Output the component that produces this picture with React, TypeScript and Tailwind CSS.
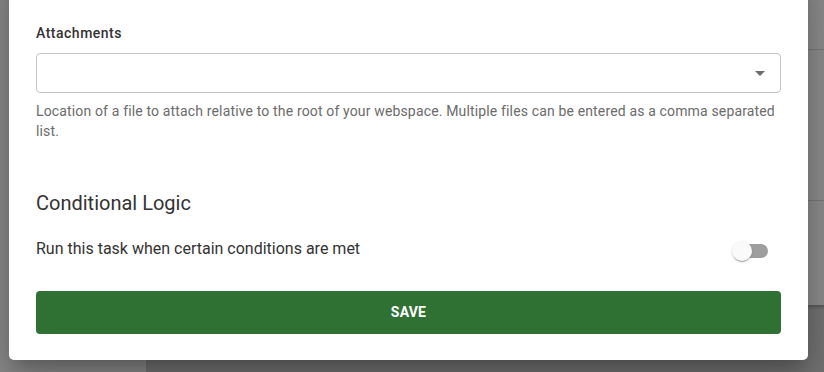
import React from "react";

const font = { fontFamily: "Roboto, 'Liberation Sans', sans-serif" };

const Switch = () => (
  <div className="relative w-[38px] h-[20px] flex items-center">
    <div className="absolute left-[2px] right-[2px] h-[14px] rounded-full bg-[#9e9e9e]" />
    <div className="absolute left-0 w-[20px] h-[20px] rounded-full bg-[#fafafa] shadow-[0_2px_1px_-1px_rgba(0,0,0,0.2),0_1px_1px_0_rgba(0,0,0,0.14),0_1px_3px_0_rgba(0,0,0,0.12)]" />
  </div>
);

const App = () => {
  return (
    <div className="relative w-[824px] h-[372px] overflow-hidden" style={font}>
      {/* dimmed page behind the dialog */}
      <div className="flex h-full">
        <div className="w-[146px] bg-[#8c8c8c]" />
        <div className="flex-1 bg-[#747474] pl-[20px]">
          <div className="mr-[-40px] flex flex-col bg-[#8e8e8e] shadow-[0_2px_3px_rgba(0,0,0,0.25)]">
            <div className="h-[50px] border-b border-[#7a7a7a]" />
            <div className="h-[151px] border-b border-[#7a7a7a]" />
            <div className="h-[104px]" />
          </div>
        </div>
      </div>

      {/* dialog */}
      <div className="absolute left-[9px] top-[-40px] w-[799px] bg-white rounded-[5px] px-[27px] pt-[63px] pb-[26px] shadow-[0_11px_15px_-7px_rgba(0,0,0,0.2),0_24px_38px_3px_rgba(0,0,0,0.14),0_9px_46px_8px_rgba(0,0,0,0.12)]">
        <label className="block text-[14px] leading-[20px] font-medium tracking-[0.5px] text-[#333]">Attachments</label>
        <div className="mt-[10px] h-[40px] rounded-[4px] border border-[#c4c4c4] flex items-center justify-end pr-[8px]">
          <svg width="24" height="24" viewBox="0 0 24 24" className="text-[#6b6b6b]">
            <path d="M7 10l5 5 5-5z" fill="currentColor" />
          </svg>
        </div>
        <p className="mt-[8px] text-[14px] leading-[20px] tracking-[0.15px] text-[#6b6b6b]">
          Location of a file to attach relative to the root of your webspace. Multiple files can be entered as a comma separated list.
        </p>

        <h2 className="mt-[48px] text-[20px] leading-[28px] text-[#333]">Conditional Logic</h2>
        <div className="mt-[20px] flex items-center justify-between h-[24px]">
          <span className="text-[16px] leading-[24px] text-[#333]">Run this task when certain conditions are met</span>
          <div className="mr-[11px] mt-[3px]">
            <Switch />
          </div>
        </div>

        <button className="mt-[30px] w-full h-[43px] rounded-[4px] bg-[#2e7133] text-white text-[14px] font-bold tracking-[0.2px] uppercase">
          Save
        </button>
      </div>
    </div>
  );
};

export default App;
